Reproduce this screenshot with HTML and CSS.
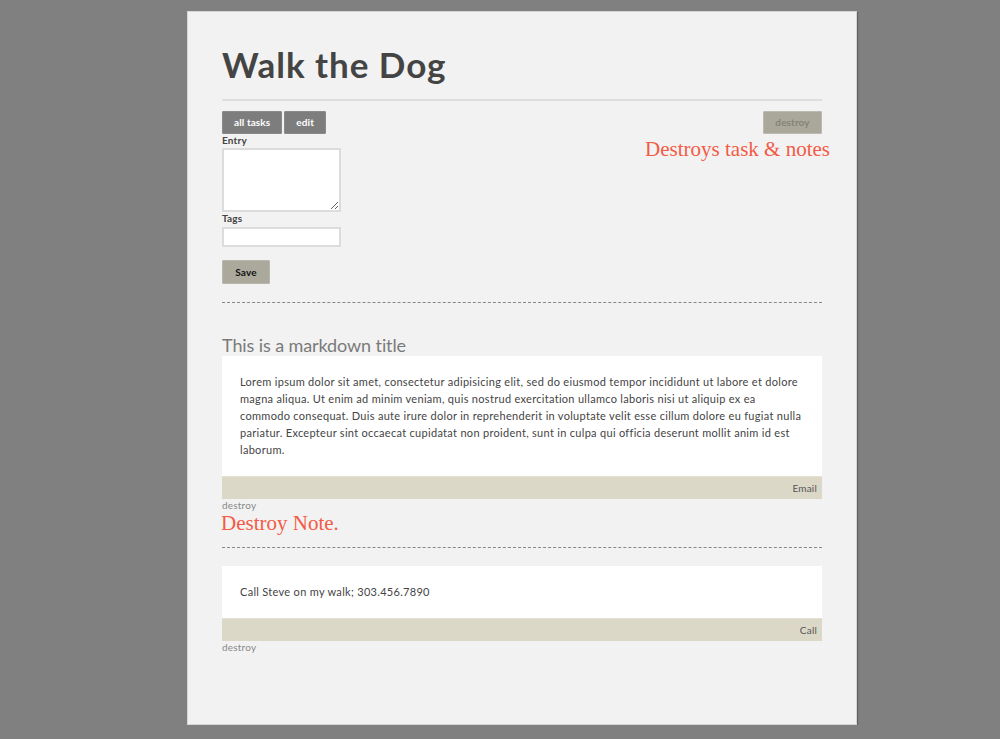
FILE: index.html
```html
<!DOCTYPE html>
<html>
<head>
<meta charset="utf-8">
<link rel="stylesheet" href="styles.css">
</head>
<body>
<div class="panel">
  <h1 class="title">Walk the Dog</h1>
  <div class="toolbar">
    <div class="btn-group">
      <a class="btn btn-dark">all tasks</a>
      <a class="btn btn-dark">edit</a>
    </div>
    <a class="btn btn-destroy">destroy</a>
    <span class="annot annot-task">Destroys task &amp; notes</span>
  </div>
  <form class="entry-form">
    <label class="lbl">Entry</label>
    <textarea class="ta"></textarea>
    <label class="lbl">Tags</label>
    <input class="inp" type="text">
    <button class="btn-save" type="button">Save</button>
  </form>
  <div class="dash"></div>
  <h2 class="md-title">This is a markdown title</h2>
  <div class="note">
    <div class="note-body">Lorem ipsum dolor sit amet, consectetur adipisicing elit, sed do eiusmod tempor incididunt ut labore et dolore magna aliqua. Ut enim ad minim veniam, quis nostrud exercitation ullamco laboris nisi ut aliquip ex ea commodo consequat. Duis aute irure dolor in reprehenderit in voluptate velit esse cillum dolore eu fugiat nulla pariatur. Excepteur sint occaecat cupidatat non proident, sunt in culpa qui officia deserunt mollit anim id est laborum.</div>
    <div class="note-foot">Email</div>
  </div>
  <div class="note-destroy">destroy</div>
  <div class="annot annot-note">Destroy Note.</div>
  <div class="dash dash2"></div>
  <div class="note note2">
    <div class="note-body short">Call Steve on my walk; 303.456.7890</div>
    <div class="note-foot">Call</div>
  </div>
  <div class="note-destroy">destroy</div>
</div>
</body>
</html>
```
FILE: styles.css
```css
html, body {
  margin: 0;
  padding: 0;
  background: #808080;
  font-family: "Lato", "Liberation Sans", sans-serif;
}
.panel {
  margin: 11px 0 0 187px;
  width: 600px;
  height: 712px;
  padding: 0 34px;
  background: #f2f2f2;
  border: 1px solid #d6d6d6;
  box-shadow: 1px 1px 1px rgba(0,0,0,0.25);
  box-sizing: content-box;
}
.title {
  margin: 0;
  padding-top: 35px;
  padding-bottom: 17px;
  font-size: 35px;
  line-height: 35px;
  font-weight: 700;
  color: #444;
  letter-spacing: 0.95px;
  border-bottom: 2px solid #dedede;
}
.toolbar {
  position: relative;
  display: flex;
  justify-content: space-between;
  margin-top: 10px;
}
.btn-group {
  display: flex;
  gap: 2px;
}
.btn {
  display: block;
  height: 23px;
  padding: 0 11px;
  font-size: 10px;
  font-weight: 700;
  border-radius: 1px;
  box-sizing: border-box;
  letter-spacing: 0.1px;
}
.btn-dark {
  background: #7d7d7d;
  color: #fff;
  border: 1px solid #8a8a8a;
  line-height: 21px;
}
.btn-destroy {
  background: #aaa89a;
  color: #858378;
  border: 1px solid #bcbab0;
  line-height: 21px;
  width: 59px;
  text-align: center;
  padding: 0;
}
.annot {
  font-family: "Liberation Serif", "DejaVu Serif", serif;
  color: #f45a45;
}
.annot-task {
  position: absolute;
  right: -8px;
  top: 25px;
  font-size: 21px;
  line-height: 26px;
}
.entry-form {
  display: flex;
  flex-direction: column;
  align-items: flex-start;
}
.lbl {
  display: block;
  font-size: 10px;
  font-weight: 700;
  color: #444;
  line-height: 13px;
  letter-spacing: 0.2px;
}
.ta {
  width: 119px;
  height: 64px;
  box-sizing: border-box;
  border: 2px solid #dcdcdc;
  background: #fff;
  margin: 1px 0 0;
  padding: 0;
  resize: vertical;
}
.inp {
  width: 119px;
  height: 20px;
  box-sizing: border-box;
  border: 2px solid #dcdcdc;
  background: #fff;
  margin: 2px 0 0;
  padding: 0;
}
.btn-save {
  margin-top: 13px;
  width: 48px;
  height: 24px;
  background: #aaa99b;
  border: 1px solid #b8b7ab;
  border-radius: 1px;
  font-family: "Lato", "Liberation Sans", sans-serif;
  font-size: 10px;
  font-weight: 700;
  color: #111;
  padding: 0;
  letter-spacing: 0.2px;
}
.dash {
  margin-top: 18px;
  border-top: 1px dashed #888;
  height: 0;
}
.md-title {
  margin: 32px 0 0;
  font-size: 18px;
  font-weight: 400;
  color: #7a7a7a;
  line-height: 20px;
  letter-spacing: -0.1px;
}
.note {
  background: #fff;
  margin-top: 1px;
}
.note-body {
  padding: 17px 18px 18px;
  font-size: 11px;
  line-height: 17px;
  color: #444;
  letter-spacing: 0.3px;
}
.note-foot {
  background: #dbd8c8;
  border-top: 1px solid #e4e2d6;
  height: 22px;
  line-height: 22px;
  text-align: right;
  padding-right: 5px;
  font-size: 10px;
  color: #555;
  letter-spacing: 0.2px;
}
.note-destroy {
  font-size: 10px;
  color: #888;
  line-height: 12px;
  margin-top: 0;
  letter-spacing: 0.2px;
}
.annot-note {
  font-size: 21px;
  line-height: 22px;
  margin-top: 1px;
  margin-left: -1px;
}
.dash2 {
  margin-top: 13px;
}
.note2 {
  margin-top: 18px;
}
```
